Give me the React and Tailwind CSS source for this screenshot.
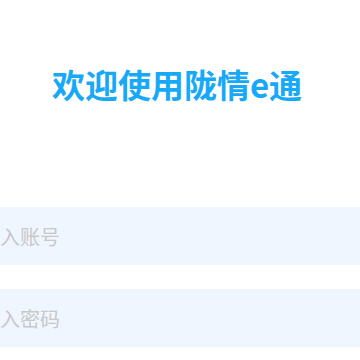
export default function App() {
    return (
        <div className="w-[360px] h-[360px] overflow-hidden bg-white font-['Noto_Sans_CJK_SC','Noto_Sans',sans-serif]">
            {/* 标题 */}
            <div className="w-[354px] pt-[64px] flex justify-center">
                <h1 className="text-[33px] leading-[40px] font-bold text-[#17a9f8]">欢迎使用陇情e通</h1>
            </div>

            {/* 登录表单 */}
            <div className="mt-[103px] ml-[-40px] w-[400px] flex flex-col gap-[24px]">
                <input
                    type="text"
                    placeholder="请输入账号"
                    className="h-[58px] w-full bg-[#eff6ff] pl-0 text-[20px] text-gray-700 placeholder:text-[#c8c8c8] outline-none"
                />
                <input
                    type="password"
                    placeholder="请输入密码"
                    className="h-[58px] w-full bg-[#eff6ff] pl-0 text-[20px] text-gray-700 placeholder:text-[#c8c8c8] outline-none"
                />
            </div>
        </div>
    );
}
